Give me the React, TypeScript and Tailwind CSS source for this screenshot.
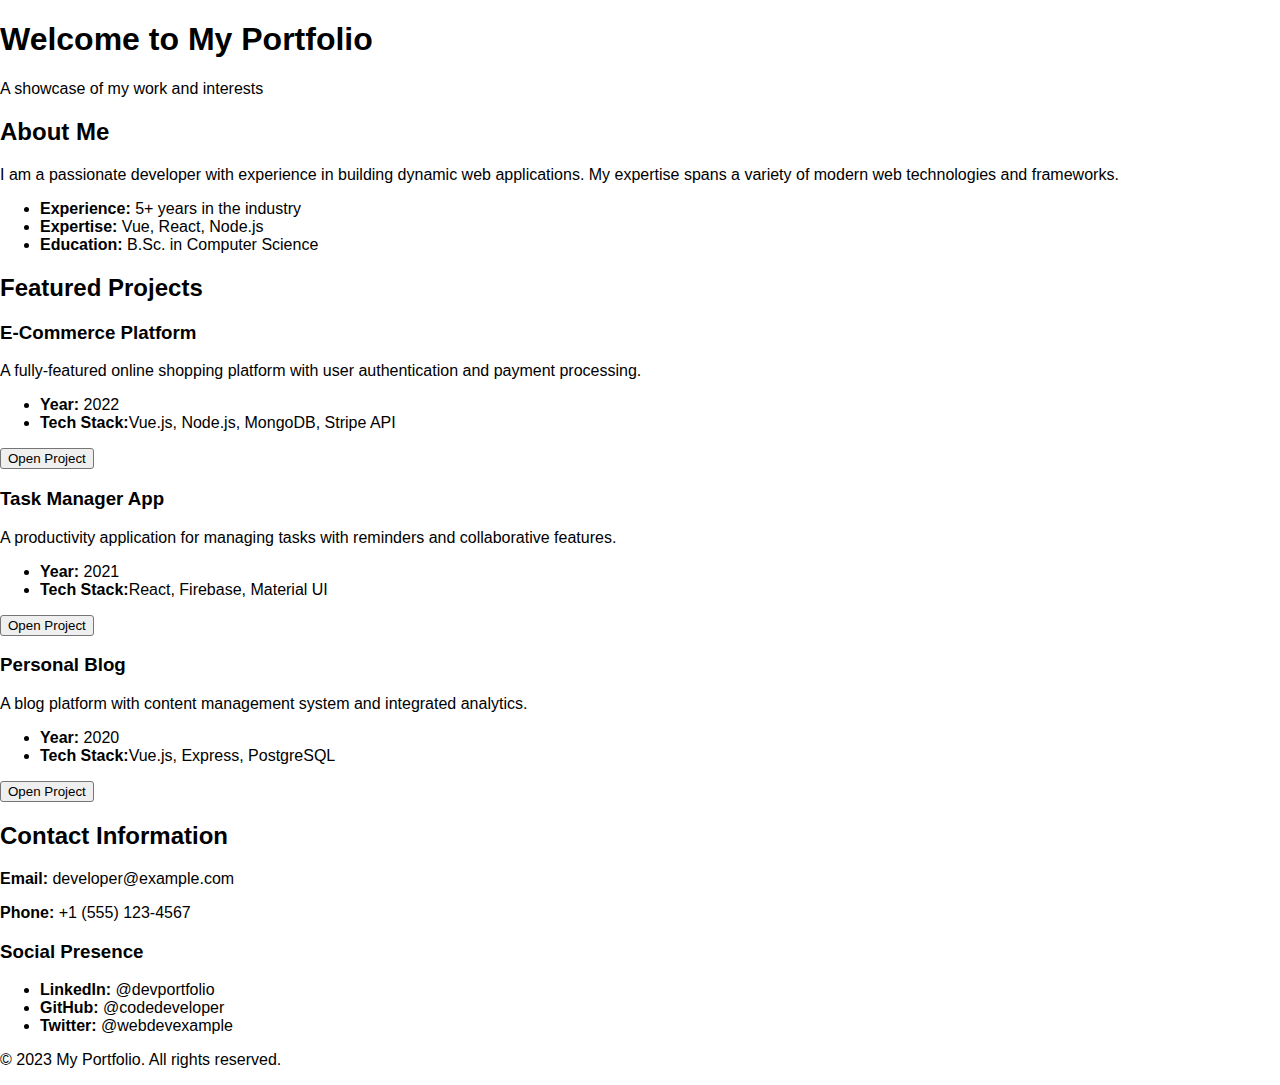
const projects = [
  {
    title: 'E-Commerce Platform',
    description: 'A fully-featured online shopping platform with user authentication and payment processing.',
    year: '2022',
    tech: 'Vue.js, Node.js, MongoDB, Stripe API',
  },
  {
    title: 'Task Manager App',
    description: 'A productivity application for managing tasks with reminders and collaborative features.',
    year: '2021',
    tech: 'React, Firebase, Material UI',
  },
  {
    title: 'Personal Blog',
    description: 'A blog platform with content management system and integrated analytics.',
    year: '2020',
    tech: 'Vue.js, Express, PostgreSQL',
  },
];

const socials = [
  { name: 'LinkedIn', handle: '@devportfolio' },
  { name: 'GitHub', handle: '@codedeveloper' },
  { name: 'Twitter', handle: '@webdevexample' },
];

const ProjectCard = ({ project }: { project: (typeof projects)[number] }) => {
  return (
    <div>
      <h3 className="text-[18.72px] font-bold my-[18.72px]">{project.title}</h3>
      <p className="my-4">{project.description}</p>
      <ul className="list-disc pl-10 my-4">
        <li>
          <strong className="font-bold">Year:</strong> {project.year}
        </li>
        <li>
          <strong className="font-bold">Tech Stack:</strong>
          {project.tech}
        </li>
      </ul>
      <button className="block text-[13.33px] leading-[normal] px-[7px] py-[2px] bg-[#efefef] border border-[#767676] rounded-[3px] text-black">
        Open Project
      </button>
    </div>
  );
};

export default function App() {
  return (
    <div className="font-['Liberation_Sans',Arial,sans-serif] text-black text-base leading-[normal] bg-white flow-root">
      <header>
        <h1 className="text-[32px] font-bold my-[21.44px]">Welcome to My Portfolio</h1>
        <p className="my-4">A showcase of my work and interests</p>
      </header>

      <section>
        <h2 className="text-2xl leading-[normal] font-bold my-[19.92px]">About Me</h2>
        <p className="my-4">
          I am a passionate developer with experience in building dynamic web applications. My expertise spans a variety of modern web technologies and frameworks.
        </p>
        <ul className="list-disc pl-10 my-4">
          <li>
            <strong className="font-bold">Experience:</strong> 5+ years in the industry
          </li>
          <li>
            <strong className="font-bold">Expertise:</strong> Vue, React, Node.js
          </li>
          <li>
            <strong className="font-bold">Education:</strong> B.Sc. in Computer Science
          </li>
        </ul>
      </section>

      <section>
        <h2 className="text-2xl leading-[normal] font-bold my-[19.92px]">Featured Projects</h2>
        {projects.map((p) => (
          <ProjectCard key={p.title} project={p} />
        ))}
      </section>

      <section>
        <h2 className="text-2xl leading-[normal] font-bold my-[19.92px]">Contact Information</h2>
        <p className="my-4">
          <strong className="font-bold">Email:</strong> developer@example.com
        </p>
        <p className="my-4">
          <strong className="font-bold">Phone:</strong> +1 (555) 123-4567
        </p>
        <h3 className="text-[18.72px] font-bold my-[18.72px]">Social Presence</h3>
        <ul className="list-disc pl-10 my-4">
          {socials.map((s) => (
            <li key={s.name}>
              <strong className="font-bold">{s.name}:</strong> {s.handle}
            </li>
          ))}
        </ul>
      </section>

      <footer>
        <p className="my-4">© 2023 My Portfolio. All rights reserved.</p>
      </footer>
    </div>
  );
}
